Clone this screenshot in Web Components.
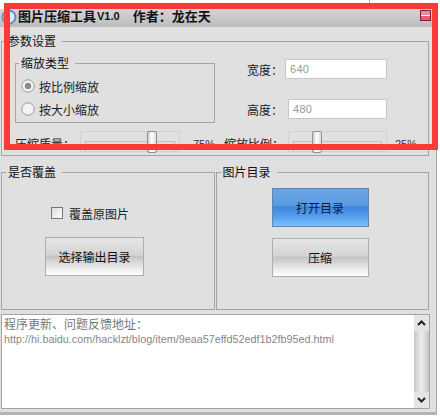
<!DOCTYPE html>
<html lang="zh">
<head>
<meta charset="utf-8">
<title>图片压缩工具</title>
<style>
  html, body { margin: 0; padding: 0; background: #fff; }
  body { font: 12px "Noto Sans CJK SC", "Liberation Sans", sans-serif; color: #111; width: 440px; height: 418px; overflow: hidden; }
</style>
</head>
<body>
<app-window>
  <title-bar title-text="图片压缩工具" version="V1.0" author="作者：龙在天"></title-bar>
  <param-panel></param-panel>
  <action-panels></action-panels>
  <log-box></log-box>
</app-window>
<highlight-frame></highlight-frame>

<script>
const groupStyle = `
  fieldset { margin: 0; padding: 0; border: 1px solid #a4a4a4; box-sizing: border-box; min-width: 0; }
  legend { margin-left: 4px; padding: 0 6px 0 2px; line-height: 16px; font-size: 12px; color: #111; }
`;

class AppWindow extends HTMLElement {
  constructor() {
    super();
    this.attachShadow({ mode: "open" });
  }
  connectedCallback() {
    this.shadowRoot.innerHTML = `
      <style>
        :host { display: block; width: 437px; height: 406px; margin-top: 9px; background: #e0e0e0; border-right: 1px solid #a8a8a8; border-bottom: 3px solid #b4b4b4; box-sizing: border-box; }
      </style>
      <slot></slot>
    `;
  }
}

class TitleBar extends HTMLElement {
  constructor() {
    super();
    this.attachShadow({ mode: "open" });
  }
  connectedCallback() {
    this.shadowRoot.innerHTML = `
      <style>
        :host { display: flex; align-items: flex-start; height: 18px; background: linear-gradient(#d4d4d4, #bcbcbc); padding-left: 1px; padding-right: 5px; }
        svg { flex: none; width: 16px; height: 16px; }
        .name { font-weight: 700; font-size: 13px; line-height: 14px; color: #111; margin-left: 1px; white-space: nowrap; }
        .ver { font: 700 11px/14px "Liberation Sans", sans-serif; margin-left: 1px; }
        .author { font-weight: 700; font-size: 13px; line-height: 14px; margin-left: 13px; white-space: nowrap; }
        .close { margin-left: auto; margin-top: 1px; width: 11px; height: 11px; border: 1px solid #8c1c2c; box-sizing: border-box; background: linear-gradient(#f08a9a 0 40%, #fff0f0 40% 55%, #e85a70 55%); }
      </style>
      <svg viewBox="0 0 16 16"><circle cx="8" cy="8" r="6.5" fill="#dfe9f5" stroke="#5f8fc8" stroke-width="2"/></svg>
      <span class="name">${this.getAttribute("title-text")}</span>
      <span class="ver">${this.getAttribute("version")}</span>
      <span class="author">${this.getAttribute("author")}</span>
      <span class="close"></span>
    `;
  }
}

class ParamPanel extends HTMLElement {
  constructor() {
    super();
    this.attachShadow({ mode: "open" });
  }
  connectedCallback() {
    this.shadowRoot.innerHTML = `
      <style>
        ${groupStyle}
        :host { display: block; margin: 6px 7px 0 1px; }
        fieldset.outer { height: 123px; }
        .inner { padding: 6px 0 0 13px; }
        .top { display: flex; }
        .type { width: 200px; height: 68px; }
        .type legend { margin-left: 3px; }
        .radios { display: flex; flex-direction: column; gap: 7px; padding: 7px 0 0 5px; }
        .fields { margin-left: 32px; margin-top: 4px; display: flex; flex-direction: column; gap: 20px; }
        .sliders { display: flex; margin-top: 8px; align-items: flex-start; }
      </style>
      <fieldset class="outer">
        <legend>参数设置</legend>
        <div class="inner">
          <div class="top">
            <fieldset class="type">
              <legend>缩放类型</legend>
              <div class="radios">
                <radio-option checked>按比例缩放</radio-option>
                <radio-option>按大小缩放</radio-option>
              </div>
            </fieldset>
            <div class="fields">
              <field-row label="宽度：" value="640" input-width="102"></field-row>
              <field-row label="高度：" value="480" input-width="99" gap="12"></field-row>
            </div>
          </div>
          <div class="sliders">
            <slider-row label="压缩质量：" pos="66" percent="75%" label-width="65" track-width="100" text-width="44" text-gap="13"></slider-row>
            <slider-row label="缩放比例：" pos="23" percent="25%" label-width="64" track-width="99" text-width="30" text-gap="8"></slider-row>
          </div>
        </div>
      </fieldset>
    `;
  }
}

class RadioOption extends HTMLElement {
  constructor() {
    super();
    this.attachShadow({ mode: "open" });
  }
  connectedCallback() {
    const dot = this.hasAttribute("checked") ? `<circle cx="7" cy="7" r="3.2" fill="#8a8a8a"/>` : "";
    this.shadowRoot.innerHTML = `
      <style>
        :host { display: flex; align-items: center; gap: 4px; height: 16px; font-size: 12px; color: #222; }
        svg { width: 14px; height: 14px; flex: none; }
      </style>
      <svg viewBox="0 0 14 14"><circle cx="7" cy="7" r="6.2" fill="#f4f4f4" stroke="#9a9a9a"/>${dot}</svg>
      <slot></slot>
    `;
  }
}

class FieldRow extends HTMLElement {
  constructor() {
    super();
    this.attachShadow({ mode: "open" });
  }
  connectedCallback() {
    const gap = this.getAttribute("gap") || "9";
    this.shadowRoot.innerHTML = `
      <style>
        :host { display: flex; align-items: center; height: 20px; font-size: 12px; color: #222; }
        .label { width: 29px; white-space: nowrap; }
        .box { box-sizing: border-box; height: 20px; background: #fff; border: 1px solid #c6c6c6; padding-left: 4px; color: #999; font: 11px/18px "Liberation Sans", sans-serif; letter-spacing: .3px; }
      </style>
      <span class="label">${this.getAttribute("label")}</span>
      <span class="box" style="margin-left:${gap}px;width:${this.getAttribute("input-width")}px">${this.getAttribute("value")}</span>
    `;
  }
}

class SliderRow extends HTMLElement {
  constructor() {
    super();
    this.attachShadow({ mode: "open" });
  }
  connectedCallback() {
    const labelWidth = this.getAttribute("label-width");
    const trackWidth = this.getAttribute("track-width");
    this.shadowRoot.innerHTML = `
      <style>
        :host { display: flex; align-items: flex-start; font-size: 12px; color: #222; }
        .label { white-space: nowrap; line-height: 26px; }
        .track { position: relative; box-sizing: border-box; height: 21px; border: 1px solid #d2d2d2; }
        .groove { position: absolute; left: 4px; right: 4px; top: 9px; bottom: -1px; border: 1px solid #c0c0c0; border-bottom: 0; }
        .thumb { position: absolute; top: -1px; width: 10px; height: 22px; box-sizing: border-box; border: 1px solid #8f8f8f; border-radius: 2px; background: linear-gradient(90deg, #ccc, #fff 45%, #ddd); }
        .pct { box-sizing: border-box; font: 11px/26px "Liberation Sans", sans-serif; color: #333; white-space: nowrap; }
      </style>
      <span class="label" style="width:${labelWidth}px">${this.getAttribute("label")}</span>
      <div class="track" style="width:${trackWidth}px">
        <div class="groove"></div>
        <div class="thumb" style="left:${this.getAttribute("pos")}px"></div>
      </div>
      <span class="pct" style="width:${this.getAttribute("text-width")}px;padding-left:${this.getAttribute("text-gap")}px">${this.getAttribute("percent")}</span>
    `;
  }
}

class ActionPanels extends HTMLElement {
  constructor() {
    super();
    this.attachShadow({ mode: "open" });
  }
  connectedCallback() {
    this.shadowRoot.innerHTML = `
      <style>
        ${groupStyle}
        :host { display: flex; gap: 1px; margin: 8px 7px 0 1px; }
        fieldset { height: 146px; }
        .left { width: 214px; }
        .right { width: 214px; }
        .left-body { padding-left: 43px; }
        .check { margin: 25px 0 16px 6px; }
        .stack { display: flex; flex-direction: column; gap: 11px; padding: 8px 0 0 55px; }
      </style>
      <fieldset class="left">
        <legend>是否覆盖</legend>
        <div class="left-body">
          <check-option class="check">覆盖原图片</check-option>
          <gloss-button width="99">选择输出目录</gloss-button>
        </div>
      </fieldset>
      <fieldset class="right">
        <legend>图片目录</legend>
        <div class="stack">
          <gloss-button width="97" variant="blue">打开目录</gloss-button>
          <gloss-button width="97">压缩</gloss-button>
        </div>
      </fieldset>
    `;
  }
}

class CheckOption extends HTMLElement {
  constructor() {
    super();
    this.attachShadow({ mode: "open" });
  }
  connectedCallback() {
    this.shadowRoot.innerHTML = `
      <style>
        :host { display: flex; align-items: center; gap: 6px; height: 16px; font-size: 12px; color: #222; }
        .box { width: 12px; height: 12px; box-sizing: border-box; border: 1px solid #777; background: linear-gradient(135deg, #dcdcdc, #fff); }
      </style>
      <span class="box"></span>
      <slot></slot>
    `;
  }
}

class GlossButton extends HTMLElement {
  constructor() {
    super();
    this.attachShadow({ mode: "open" });
  }
  connectedCallback() {
    const blue = this.getAttribute("variant") === "blue";
    const look = blue
      ? "border-color:#5f86ac;background:linear-gradient(#6aa6e6,#5c9ae0 45%,#3c86dc 48%,#4f9bea 70%,#7cc0fa);color:#0c1c3a"
      : "border-color:#adadad;background:linear-gradient(#e6e6e6,#d4d4d4 45%,#c4c4c4 50%,#e8e8e8 78%,#fff);color:#111";
    this.shadowRoot.innerHTML = `
      <style>
        :host { display: block; }
        button { display: block; box-sizing: border-box; height: 39px; padding: 0; border: 1px solid; border-radius: 0; font: 12px "Noto Sans CJK SC", sans-serif; }
      </style>
      <button style="width:${this.getAttribute("width")}px;${look}"><slot></slot></button>
    `;
  }
}

class LogBox extends HTMLElement {
  constructor() {
    super();
    this.attachShadow({ mode: "open" });
  }
  connectedCallback() {
    this.shadowRoot.innerHTML = `
      <style>
        :host { display: flex; box-sizing: border-box; height: 95px; margin: 4px 6px 0 1px; background: #fff; border: 1px solid #a4a4a4; }
        .text { flex: 1; padding: 1px 2px; color: #888; min-width: 0; }
        .head { font-size: 12px; line-height: 16px; color: #777; }
        .url { font: 10.8px/13px "Liberation Sans", sans-serif; margin-top: 1px; white-space: nowrap; }
        .bar { width: 15px; display: flex; flex-direction: column; background: linear-gradient(90deg, #c8c8c8, #ececec 50%, #c4c4c4); }
        .arrow { height: 16px; background: #e4e4e4; display: flex; align-items: center; justify-content: center; }
        .thumb { flex: 1; }
        svg { width: 9px; height: 6px; }
      </style>
      <div class="text">
        <div class="head">程序更新、问题反馈地址：</div>
        <div class="url">http://hi.baidu.com/hacklzt/blog/item/9eaa57effd52edf1b2fb95ed.html</div>
      </div>
      <div class="bar">
        <div class="arrow"><svg viewBox="0 0 9 6"><path d="M1 5 4.5 1.5 8 5" fill="none" stroke="#222" stroke-width="2"/></svg></div>
        <div class="thumb"></div>
        <div class="arrow"><svg viewBox="0 0 9 6"><path d="M1 1 4.5 4.5 8 1" fill="none" stroke="#222" stroke-width="2"/></svg></div>
      </div>
    `;
  }
}

// annotation drawn over the screenshot
class HighlightFrame extends HTMLElement {
  constructor() {
    super();
    this.attachShadow({ mode: "open" });
  }
  connectedCallback() {
    this.shadowRoot.innerHTML = `
      <style>
        :host { display: block; position: absolute; left: 4px; top: 3px; width: 434px; height: 147px; box-sizing: border-box; border: 6px solid #f73b3b; pointer-events: none; }
        :host::after { content: ""; position: absolute; left: 359px; top: -9px; width: 1px; height: 3px; background: #aaa; }
      </style>
    `;
  }
}

customElements.define("app-window", AppWindow);
customElements.define("title-bar", TitleBar);
customElements.define("param-panel", ParamPanel);
customElements.define("radio-option", RadioOption);
customElements.define("field-row", FieldRow);
customElements.define("slider-row", SliderRow);
customElements.define("action-panels", ActionPanels);
customElements.define("check-option", CheckOption);
customElements.define("gloss-button", GlossButton);
customElements.define("log-box", LogBox);
customElements.define("highlight-frame", HighlightFrame);
</script>
</body>
</html>
